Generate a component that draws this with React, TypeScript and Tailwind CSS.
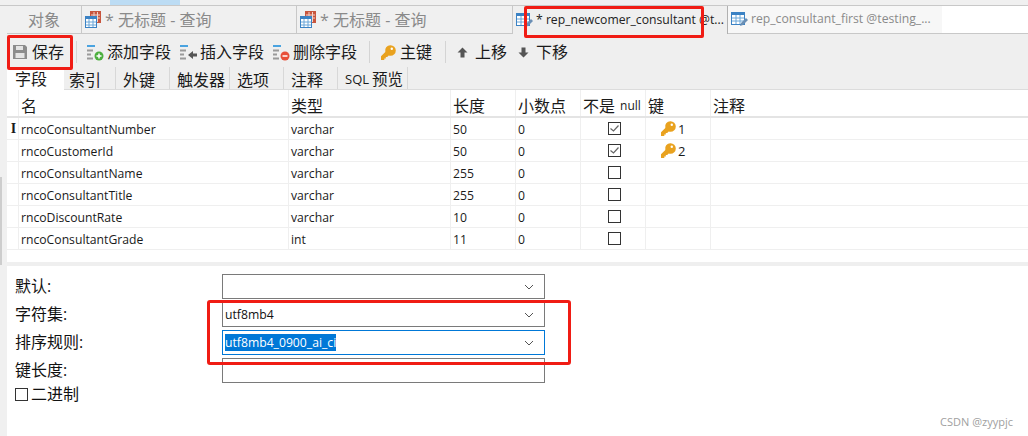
import React from "react";

const font = { fontFamily: '"Open Sans","Noto Sans CJK SC",sans-serif' };

function TableIcon({ edit, query }: { edit?: boolean; query?: boolean }) {
  return (
    <svg width="17" height="17" viewBox="0 0 17 17" className="shrink-0">
      {query && <rect x="5" y="0" width="11" height="12" fill="#c8553d" />}
      {query && <path d="M6 4h9M6 7h9M9 1v10M12.500 1v10" stroke="#f3d5cd" strokeWidth="1" />}
      <rect x="0.500" y={query ? 5.500 : 1.500} width={query ? 11 : 13} height={query ? 11 : 12} fill="#fff" stroke="#3b82c4" />
      <rect x="0" y={query ? 5 : 1} width={query ? 12 : 14} height="3" fill="#3b82c4" />
      <path d={query ? "M4 8v8M8 8v8M1 11h10M1 14h10" : "M5 4v9M9 4v9M1 7h12M1 10h12"} stroke="#6ba6d8" strokeWidth="1" />
      {edit && <path d="M9 15l1-3 5-5 2 2-5 5z" fill="#6b8fb5" />}
    </svg>
  );
}

function ListIcon({ kind }: { kind: "add" | "insert" | "del" }) {
  return (
    <svg width="17" height="17" viewBox="0 0 17 17" className="shrink-0">
      <path d="M0 2h8" stroke="#4aa3e0" strokeWidth="2" />
      <path d="M0 6.500h6M0 10.500h4M0 14.500h6" stroke="#9a9a9a" strokeWidth="2" />
      {kind === "add" && (
        <>
          <circle cx="12" cy="12" r="4.500" fill="#4caf3e" />
          <path d="M9.500 12h5M12 9.500v5" stroke="#fff" strokeWidth="1.500" />
        </>
      )}
      {kind === "del" && (
        <>
          <circle cx="12" cy="12" r="4.500" fill="#e8503a" />
          <path d="M9.500 12h5" stroke="#fff" strokeWidth="1.500" />
        </>
      )}
      {kind === "insert" && <path d="M8 11l5-4v2.500h4v3h-4V15z" fill="#555" />}
    </svg>
  );
}

function KeyIcon() {
  return (
    <svg width="15" height="15" viewBox="0 0 15 15" className="shrink-0">
      <path d="M9.500 0.200a5.300 5.300 0 0 1 0 10.600 5 5 0 0 1-1.800-.4L6.200 12H4.800v1.400H3.300V15H0V11.300l4.300-4.300a5.300 5.300 0 0 1 5.200-6.800z" fill="#e9a21f" />
      <circle cx="10.800" cy="3.800" r="1.200" fill="#fff" />
    </svg>
  );
}

function Arrow({ up }: { up?: boolean }) {
  return (
    <svg width="11" height="11" viewBox="0 0 11 11" className="shrink-0">
      <path d={up ? "M5.500 0.500L0.500 5.500h3V10.500h4V5.500h3z" : "M5.500 10.500L0.500 5.500h3V0.500h4V5.500h3z"} fill="#555" />
    </svg>
  );
}

function Chevron() {
  return (
    <svg width="10" height="6" viewBox="0 0 10 6" className="shrink-0">
      <path d="M1 1l4 4 4-4" fill="none" stroke="#555" strokeWidth="1" />
    </svg>
  );
}

function Check({ on }: { on?: boolean }) {
  return (
    <div className="flex h-[13px] w-[13px] shrink-0 items-center justify-center border border-[#333] bg-white">
      {on && (
        <svg width="11" height="11" viewBox="0 0 11 11">
          <path d="M1.500 5.500l3 2.500 5-5.500" fill="none" stroke="#666" strokeWidth="1.200" />
        </svg>
      )}
    </div>
  );
}

function Tool({ icon, label, className = "" }: { icon: React.ReactNode; label: string; className?: string }) {
  return (
    <div className={`flex items-center text-[16px] leading-none text-[#1a1a1a] ${className}`}>
      {icon}
      <span>{label}</span>
    </div>
  );
}

const Sep = ({ className = "" }: { className?: string }) => <div className={`h-[22px] w-px bg-[#d4d4d4] ${className}`} />;

const cols = ["w-[12px]", "w-[270px]", "w-[162px]", "w-[65px]", "w-[65px]", "w-[65px]", "w-[65px]", "flex-1"];

const rows = [
  ["rncoConsultantNumber", "varchar", "50", "0", true, "1"],
  ["rncoCustomerId", "varchar", "50", "0", true, "2"],
  ["rncoConsultantName", "varchar", "255", "0", false, ""],
  ["rncoConsultantTitle", "varchar", "255", "0", false, ""],
  ["rncoDiscountRate", "varchar", "10", "0", false, ""],
  ["rncoConsultantGrade", "int", "11", "0", false, ""],
] as const;

function Cell({ w, children, className = "" }: { w: string; children?: React.ReactNode; className?: string }) {
  return <div className={`flex h-full items-center border-r border-[#efefef] pl-[2px] ${w} ${className}`}>{children}</div>;
}

function FormRow({ label, value, focus, noChevron }: { label: string; value?: string; focus?: boolean; noChevron?: boolean }) {
  return (
    <div className="flex h-[28px] items-start">
      <div className="mt-[2px] w-[207px] text-[16px] leading-[20px] text-[#111]">{label}</div>
      <div className={`flex h-[25px] w-[323px] items-center justify-between border bg-white pl-[2px] pr-[10px] ${focus ? "border-[#0078d7]" : "border-[#7a7a7a]"}`}>
        <span className={`text-[12.200px] leading-[17px] ${focus ? "bg-[#0078d7] text-white" : "text-[#111]"}`}>{value}</span>
        {!noChevron && <Chevron />}
      </div>
    </div>
  );
}

export default function App() {
  return (
    <div className="relative h-[436px] w-[1028px] overflow-hidden bg-white" style={font}>
      {/* title strip */}
      <div className="h-[6px] border-b border-[#c8c8c8] bg-[#f0f0f0] pl-[110px]">
        <div className="h-[5px] w-[70px] bg-[#bcdcf4]" />
      </div>

      <div className="flex h-[430px]">
        <div className="w-[7px] shrink-0 bg-[#f0f0f0]" />
        <div className="flex min-w-0 flex-1 flex-col">
          {/* document tabs */}
          <div className="flex h-[28px] items-stretch border-b border-[#c8c8c8] bg-[#f0f0f0] text-[16px] leading-none text-[#8a8a8a]">
            <div className="flex w-[75px] items-center justify-center border-r border-[#c8c8c8]">对象</div>
            <div className="flex w-[215px] items-center gap-[3px] border-r border-[#c8c8c8] pl-[3px]">
              <TableIcon query />
              <span>* 无标题 - 查询</span>
            </div>
            <div className="flex w-[216px] items-center gap-[3px] border-r border-[#c8c8c8] pl-[3px]">
              <TableIcon query />
              <span>* 无标题 - 查询</span>
            </div>
            <div className="mb-[-1px] flex w-[215px] items-center gap-[3px] border-r border-[#b0b0b0] bg-[#efefef] pl-[3px] text-[12.200px] text-[#222]">
              <TableIcon edit />
              <span className="whitespace-nowrap">* rep_newcomer_consultant @t...</span>
            </div>
            <div className="flex w-[214px] items-center gap-[3px] bg-[#f7f7f7] pl-[3px] text-[12.200px] text-[#8a8a8a]">
              <TableIcon edit />
              <span className="whitespace-nowrap">rep_consultant_first @testing_...</span>
            </div>
            <div className="flex-1 bg-white" />
          </div>

          {/* toolbar */}
          <div className="flex h-[33px] items-center bg-[#efefef] pl-[5px] pt-[3px]">
            <Tool
              label="保存"
              className="gap-[4px]"
              icon={
                <svg width="16" height="16" viewBox="0 0 16 16" className="shrink-0">
                  <path d="M1 1h12l2 2v12H1z" fill="#8c8c8c" />
                  <rect x="4" y="2" width="7" height="4" fill="#e4e4e4" />
                  <rect x="3.500" y="9" width="9" height="5" fill="#e4e4e4" />
                </svg>
              }
            />
            <Sep className="ml-[12px] mr-[10px]" />
            <Tool label="添加字段" icon={<ListIcon kind="add" />} className="mr-[9px] gap-[3px]" />
            <Tool label="插入字段" icon={<ListIcon kind="insert" />} className="mr-[9px] gap-[3px]" />
            <Tool label="删除字段" icon={<ListIcon kind="del" />} className="gap-[3px]" />
            <Sep className="ml-[12px] mr-[11px]" />
            <Tool label="主键" icon={<KeyIcon />} className="gap-[4px]" />
            <Sep className="ml-[13px] mr-[11px]" />
            <Tool label="上移" icon={<Arrow up />} className="gap-[7px]" />
            <Tool label="下移" icon={<Arrow />} className="ml-[11px] gap-[7px]" />
          </div>

          {/* sub tabs */}
          <div className="flex h-[23px] items-stretch border-b border-[#dcdcdc] bg-[#efefef] text-[16px] leading-none text-[#1a1a1a]">
            <div className="mb-[-1px] flex w-[57px] items-center bg-white pl-[8px]">字段</div>
            <div className="flex w-[52px] items-center border-r border-[#d8d8d8] pl-[5px] pt-[3px]">索引</div>
            <div className="flex w-[54px] items-center border-r border-[#d8d8d8] pl-[7px] pt-[3px]">外键</div>
            <div className="flex w-[60px] items-center border-r border-[#d8d8d8] pl-[7px] pt-[3px]">触发器</div>
            <div className="flex w-[54px] items-center border-r border-[#d8d8d8] pl-[7px] pt-[3px]">选项</div>
            <div className="flex w-[54px] items-center border-r border-[#d8d8d8] pl-[7px] pt-[3px]">注释</div>
            <div className="flex w-[70px] items-center gap-[3px] whitespace-nowrap border-r border-[#d8d8d8] pl-[7px] pt-[3px] text-[15.500px]">
              <span className="text-[13px]">SQL</span>
              <span>预览</span>
            </div>
          </div>

          {/* field table */}
          <div className="h-[172px] bg-white text-[12.200px] text-[#1a1a1a]">
            <div className="flex h-[28px] border-b-2 border-[#e4e4e4] text-[16px] leading-none">
              <Cell w={cols[0]} />
              <Cell w={cols[1]} className="pt-[5px]">名</Cell>
              <Cell w={cols[2]} className="pt-[5px]">类型</Cell>
              <Cell w={cols[3]} className="pt-[5px]">长度</Cell>
              <Cell w={cols[4]} className="pt-[5px]">小数点</Cell>
              <Cell w={cols[5]} className="pt-[5px]">
                不是<span className="ml-[5px] text-[12px]">null</span>
              </Cell>
              <Cell w={cols[6]} className="pt-[5px]">键</Cell>
              <Cell w={cols[7]} className="border-r-0 pt-[5px]">注释</Cell>
            </div>
            {rows.map((r, i) => (
              <div key={r[0]} className="flex h-[22px] border-b border-[#efefef]">
                <Cell w={cols[0]} className="justify-center pl-0 text-[14px] font-bold">
                  {i === 0 && <span style={{ fontFamily: '"Liberation Serif",serif' }}>I</span>}
                </Cell>
                <Cell w={cols[1]} className="pt-[3px]">{r[0]}</Cell>
                <Cell w={cols[2]} className="pt-[3px]">{r[1]}</Cell>
                <Cell w={cols[3]} className="pt-[3px]">{r[2]}</Cell>
                <Cell w={cols[4]} className="pt-[3px]">{r[3]}</Cell>
                <Cell w={cols[5]} className="justify-center pl-0">
                  <Check on={r[4]} />
                </Cell>
                <Cell w={cols[6]} className="gap-[2px] pl-[15px]">
                  {r[5] && <KeyIcon />}
                  {r[5] && <span className="pt-[3px] text-[13px]">{r[5]}</span>}
                </Cell>
                <Cell w={cols[7]} className="border-r-0" />
              </div>
            ))}
          </div>

          <div className="h-[4px] bg-[#efefef]" />

          {/* properties */}
          <div className="flex-1 bg-white pl-[8px] pt-[8px]">
            <FormRow label="默认:" />
            <FormRow label="字符集:" value="utf8mb4" />
            <FormRow label="排序规则:" value="utf8mb4_0900_ai_ci" focus />
            <FormRow label="键长度:" noChevron />
            <div className="-mt-[2px] flex items-center gap-[3px] text-[16px] leading-[20px] text-[#111]">
              <Check />
              <span>二进制</span>
            </div>
          </div>
        </div>
      </div>

      {/* scroll thumb in the left strip */}
      <div className="absolute left-0 top-[177px] h-[88px] w-[2px] bg-[#cdcdcd]" />

      {/* red annotations */}
      <div className="absolute left-[7px] top-[35px] h-[35px] w-[66px] rounded-[2px] border-[3px] border-[#f01c14]" />
      <div className="absolute left-[524px] top-[6px] h-[32px] w-[180px] rounded-[2px] border-[3px] border-[#f01c14]" />
      <div className="absolute left-[207px] top-[300px] h-[65px] w-[364px] rounded-[3px] border-[3px] border-[#f01c14]" />

      <div className="absolute bottom-[9px] right-[15px] text-[11px] leading-none text-[#a0a0a0]">CSDN @zyypjc</div>
    </div>
  );
}
